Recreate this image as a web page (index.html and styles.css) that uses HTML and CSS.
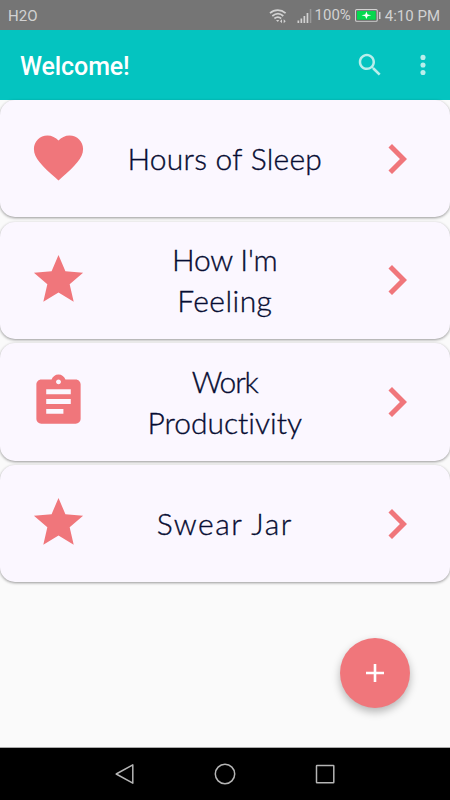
FILE: index.html
```html
<!DOCTYPE html>
<html lang="en">
<head>
  <meta charset="UTF-8" />
  <meta name="viewport" content="width=device-width, initial-scale=1.0" />
  <title>Welcome!</title>
  <link rel="stylesheet" href="styles.css">
</head>
<body>
  <div class="status-bar">
    <span class="carrier">H2O</span>
    <svg class="wifi" width="18" height="16" viewBox="0 0 18 16" fill="none" stroke="#d2d2d2" stroke-width="1.7">
      <path d="M1 5.2C5.5 1.2 12 1.2 16.6 5.2M3.3 8C7 5 11 5 14.3 8M5.4 10.5C7.6 8.8 10 8.8 12.2 10.5" />
      <path d="M7 12l1.8 2 1.4-2z" fill="#d2d2d2" stroke="none" />
      <path d="M11 13.3l2-2v4zM16.7 13.3l-2-2v4z" fill="#d2d2d2" stroke="none" />
    </svg>
    <svg class="signal" width="15" height="14" viewBox="0 0 15 14" fill="#d2d2d2">
      <path d="M.5 11.5h1.7V14H.5zM3.5 9.5h1.7V14H3.5zM6.5 7h1.7v7H6.5zM9.6 4h1.7v10H9.6z" />
      <path d="M12.8 0h1.5v14h-1.5z" fill="#999" />
    </svg>
    <span class="percent">100%</span>
    <svg class="battery" width="26" height="13" viewBox="0 0 26 13">
      <rect x=".6" y=".6" width="21.6" height="11.6" rx="1" fill="#5f5f5f" stroke="#d2d2d2" stroke-width="1.1" />
      <rect x="2" y="2" width="18.8" height="8.8" fill="#06d84f" />
      <path d="M11.4 2.6l1.2 2.8 3.7.9-3.7.9-1.2 2.8-1.2-2.8-3.7-.9 3.7-.9z" fill="#fff" />
      <path d="M24 3h1.5v7H24z" fill="#d2d2d2" />
    </svg>
    <span class="time">4:10 PM</span>
  </div>

  <header>
    <h1>Welcome!</h1>
    <svg class="search" width="30" height="30" viewBox="0 0 24 24" fill="#b9eeeb">
      <path d="M15.5 14h-.79l-.28-.27C15.41 12.59 16 11.11 16 9.5 16 5.91 13.09 3 9.5 3S3 5.91 3 9.5 5.91 16 9.5 16c1.61 0 3.09-.59 4.23-1.57l.27.28v.79l5 4.99L20.49 19l-4.99-5zm-6 0C7.01 14 5 11.99 5 9.5S7.01 5 9.5 5 14 7.01 14 9.5 11.99 14 9.5 14z" />
    </svg>
    <svg class="more" width="6" height="22" viewBox="0 0 6 22" fill="#b9eeeb">
      <circle cx="3" cy="3.4" r="2.55" />
      <circle cx="3" cy="11" r="2.55" />
      <circle cx="3" cy="18.5" r="2.55" />
    </svg>
  </header>

  <main>
    <div class="card">
      <svg class="icon" viewBox="0 0 24 24"><path d="M12 21.35l-1.45-1.32C5.4 15.36 2 12.28 2 8.5 2 5.42 4.42 3 7.5 3c1.74 0 3.41.81 4.5 2.09C13.09 3.81 14.76 3 16.5 3 19.58 3 22 5.42 22 8.5c0 3.78-3.4 6.86-8.55 11.54L12 21.35z" /></svg>
      <h3 class="sleep">Hours of Sleep</h3>
      <svg class="arrow" viewBox="0 0 24 24"><path d="M10 6L8.59 7.41 13.17 12l-4.58 4.59L10 18l6-6z" /></svg>
    </div>
    <div class="card">
      <svg class="icon" viewBox="0 0 24 24"><path d="M12 17.27L18.18 21l-1.64-7.03L22 9.24l-7.19-.61L12 2 9.19 8.63 2 9.24l5.46 4.73L5.82 21z" /></svg>
      <h3><span class="how">How I'm</span><br><span class="feeling">Feeling</span></h3>
      <svg class="arrow" viewBox="0 0 24 24"><path d="M10 6L8.59 7.41 13.17 12l-4.58 4.59L10 18l6-6z" /></svg>
    </div>
    <div class="card">
      <svg class="icon" viewBox="0 0 24 24"><path d="M19 3h-4.18C14.4 1.84 13.3 1 12 1c-1.3 0-2.4.84-2.82 2H5c-1.1 0-2 .9-2 2v14c0 1.1.9 2 2 2h14c1.1 0 2-.9 2-2V5c0-1.1-.9-2-2-2zm-7 0c.55 0 1 .45 1 1s-.45 1-1 1-1-.45-1-1 .45-1 1-1zm2 14H7v-2h7v2zm3-4H7v-2h10v2zm0-4H7V7h10v2z" /></svg>
      <h3><span class="work">Work</span><br><span class="productivity">Productivity</span></h3>
      <svg class="arrow" viewBox="0 0 24 24"><path d="M10 6L8.59 7.41 13.17 12l-4.58 4.59L10 18l6-6z" /></svg>
    </div>
    <div class="card">
      <svg class="icon" viewBox="0 0 24 24"><path d="M12 17.27L18.18 21l-1.64-7.03L22 9.24l-7.19-.61L12 2 9.19 8.63 2 9.24l5.46 4.73L5.82 21z" /></svg>
      <h3 class="swear">Swear Jar</h3>
      <svg class="arrow" viewBox="0 0 24 24"><path d="M10 6L8.59 7.41 13.17 12l-4.58 4.59L10 18l6-6z" /></svg>
    </div>
    <button class="add-btn" aria-label="Add">
      <svg width="18" height="18" viewBox="0 0 18 18" stroke="#fff" stroke-width="2.6"><path d="M9 0v18M0 9h18" /></svg>
    </button>
  </main>

  <nav>
    <svg width="22" height="22" viewBox="0 0 22 22"><path d="M18.8 1.8v18.4L2.2 11z" /></svg>
    <svg width="22" height="22" viewBox="0 0 22 22"><circle cx="11" cy="11" r="9.7" /></svg>
    <svg width="22" height="22" viewBox="0 0 22 22"><rect x="2.5" y="2.5" width="17.3" height="17.3" rx=".5" /></svg>
  </nav>
</body>
</html>
```
FILE: styles.css
```css
* {
  margin: 0;
  padding: 0;
  box-sizing: border-box;
}
body {
  height: 800px;
  display: flex;
  flex-direction: column;
  overflow: hidden;
  font-family: Roboto, sans-serif;
  background-color: #fafafa;
}
.status-bar {
  height: 30px;
  display: flex;
  align-items: center;
  padding: 1px 10px 0 8px;
  background-color: #757575;
  color: #d2d2d2;
  font-size: 15px;
}
.carrier {
  flex: 1;
}
.wifi {
  margin-right: 10px;
}
.signal {
  margin-right: 3px;
}
.percent {
  margin-right: 4px;
  margin-top: -2px;
}
.battery {
  margin-right: 4px;
}
header {
  height: 70px;
  display: flex;
  align-items: center;
  padding: 0 24.5px 0 20px;
  background-color: #04c4c0;
}
h1 {
  flex: 1;
  padding-top: 2px;
  color: #fff;
  font-size: 25px;
  font-weight: 500;
  letter-spacing: -0.1px;
}
.search {
  margin-right: 35px;
}
main {
  flex: 1;
  position: relative;
  display: flex;
  flex-direction: column;
  gap: 4.3px;
  border-bottom: 1px solid #aaa;
}
.card {
  height: 117.4px;
  display: flex;
  align-items: center;
  padding: 0 23px 0 28.5px;
  background-color: #fbf7ff;
  border-radius: 15px;
  box-shadow: 0 1px 3px rgba(0, 0, 0, 0.4);
}
.icon {
  width: 59px;
  height: 59px;
  margin-top: -2px;
  fill: #f0767b;
}
.arrow {
  width: 60px;
  height: 60px;
  fill: #f0767b;
}
.card h3 {
  flex: 1;
  padding-right: 5px;
  color: #060c32;
  font-family: Lato, sans-serif;
  font-size: 30px;
  font-weight: 300;
  font-variant-ligatures: none;
  line-height: 41px;
  text-align: center;
  -webkit-text-stroke: 0.35px #060c32;
}
.card .sleep {
  letter-spacing: 0.25px;
}
.how {
  letter-spacing: -0.2px;
}
.feeling {
  letter-spacing: 0.45px;
}
.work {
  letter-spacing: -1.2px;
}
.card .swear {
  letter-spacing: 1.5px;
}
.add-btn {
  position: absolute;
  right: 40px;
  bottom: 39.5px;
  width: 70px;
  height: 70px;
  display: flex;
  align-items: center;
  justify-content: center;
  border: none;
  border-radius: 50%;
  background-color: #f0767b;
  box-shadow: 0 4px 9px rgba(0, 0, 0, 0.28);
}
nav {
  height: 52px;
  display: flex;
  justify-content: center;
  align-items: center;
  gap: 78px;
  background-color: #000;
}
nav svg {
  fill: none;
  stroke: #b5b5b5;
  stroke-width: 1.5;
  stroke-linejoin: round;
}
```
